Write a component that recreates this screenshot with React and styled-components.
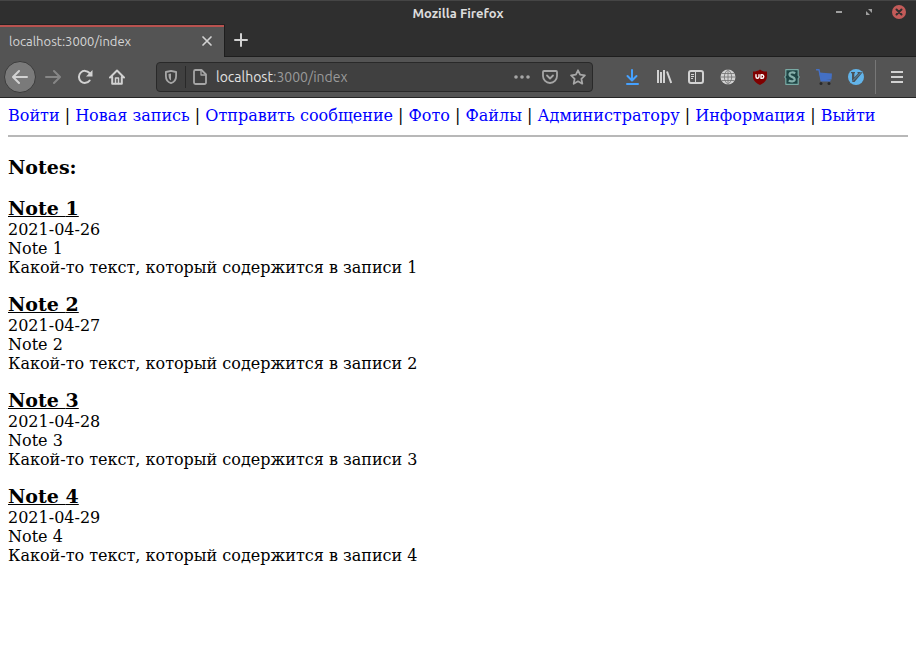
import React from "react";
import styled, { createGlobalStyle } from "styled-components";

const GlobalStyle = createGlobalStyle`
  * { box-sizing: border-box; }
  html, body { margin: 0; background: #ffffff; }
`;

const UI_FONT = '"Ubuntu", "Noto Sans", "Open Sans", sans-serif';

const Window = styled.div`
  min-height: 100vh;
  background: #ffffff;
  font-family: ${UI_FONT};
`;

const TitleBar = styled.header`
  display: grid;
  grid-template-columns: 1fr auto 1fr;
  align-items: center;
  height: 25px;
  padding-right: 9px;
  background: #2f2f2f;
  border-top: 1px solid #454545;
`;

const WindowTitle = styled.h1`
  grid-column: 2;
  margin: 0;
  padding-left: 9px;
  font-size: 13px;
  line-height: 18px;
  font-weight: 600;
  color: #dcdcdc;
`;

const WindowControls = styled.div`
  display: flex;
  justify-content: flex-end;
  gap: 14px;
`;

const PlainButton = styled.button`
  display: flex;
  align-items: center;
  justify-content: center;
  flex: none;
  padding: 0;
  border: 0;
  background: transparent;
  color: ${(p) => p.$color || "#d2d2d2"};
`;

const ControlButton = styled(PlainButton)`
  width: 16px;
  height: 22px;
`;

const TabStrip = styled.div`
  display: flex;
  height: 32px;
  background: #2f2f2f;
`;

const Tab = styled.div`
  display: flex;
  width: 225px;
  background: #545454;
  border-right: 1px solid #1e1e1e;
  box-shadow: 0 -1px 0 #222222;
`;

const TabBody = styled.div`
  display: flex;
  align-items: center;
  flex: 1;
  padding: 0 9px 2px;
  border-top: 2px solid #b9524f;
`;

const TabLabel = styled.span`
  flex: 1;
  font-size: 13px;
  line-height: 18px;
  color: #d6d6d6;
`;

const TabButton = styled(PlainButton)`
  width: 16px;
  height: 16px;
`;

const NewTabArea = styled.div`
  display: flex;
  align-items: center;
  flex: 1;
  padding: 0 8px 1px;
  border-bottom: 1px solid #1e1e1e;
`;

const Toolbar = styled.nav`
  display: flex;
  align-items: center;
  height: 41px;
  padding: 0 3px 0 4px;
  background: #545454;
  border-bottom: 1px solid #252525;
`;

const ToolButton = styled(PlainButton)`
  width: 32px;
  height: 32px;
`;

const BackButton = styled(ToolButton)`
  margin-right: 1px;
  border: 1px solid #3c3c3c;
  border-radius: 50%;
  background: #7a7a7a;
`;

const AddressBar = styled.div`
  display: flex;
  align-items: center;
  flex: 1;
  min-width: 0;
  height: 30px;
  margin: 0 23px;
  background: #404040;
  border: 1px solid #292929;
  border-radius: 4px;
`;

const AddressButton = styled(PlainButton)`
  width: 28px;
  height: 28px;
`;

const AddressDivider = styled.span`
  width: 1px;
  height: 22px;
  background: #292929;
`;

const Address = styled.div`
  flex: 1;
  min-width: 0;
  padding-left: 2px;
  font-size: 14px;
  line-height: 20px;
  white-space: nowrap;
  color: #9a9a9a;
`;

const Host = styled.span`
  color: #e2e2e2;
`;

const ToolbarDivider = styled.span`
  width: 1px;
  height: 34px;
  margin: 0 5px 0 3px;
  background: #777777;
`;

const Page = styled.main`
  padding: 8px;
  font-family: "DejaVu Serif", serif;
  font-size: 16px;
  line-height: 19px;
  color: #000000;
`;

const SiteNav = styled.nav`
  padding-bottom: 10px;
  border-bottom: 2px solid #b8b8b8;
`;

const NavLink = styled.a`
  color: #0000ff;
  text-decoration: none;
`;

const Heading = styled.h2`
  margin: 19px 0;
  font-size: 19px;
  line-height: 22px;
  font-weight: bold;
`;

const Note = styled.article`
  margin-bottom: 16px;
`;

const NoteTitle = styled.h3`
  margin: 0 0 1px;
  font-size: 19px;
  line-height: 22px;
  font-weight: bold;
  text-decoration: underline;
`;

const Line = styled.p`
  margin: 0;
`;

const Icon = ({ size = 16, children }) => (
  <svg
    width={size}
    height={size}
    viewBox={`0 0 ${size} ${size}`}
    fill="none"
    stroke="currentColor"
    strokeWidth="2"
    strokeLinecap="round"
    strokeLinejoin="round"
    aria-hidden="true"
  >
    {children}
  </svg>
);

const links = [
  "Войти",
  "Новая запись",
  "Отправить сообщение",
  "Фото",
  "Файлы",
  "Администратору",
  "Информация",
  "Выйти",
];

const notes = [
  { id: 1, date: "2021-04-26" },
  { id: 2, date: "2021-04-27" },
  { id: 3, date: "2021-04-28" },
  { id: 4, date: "2021-04-29" },
];

const extensions = [
  {
    label: "Downloads",
    color: "#45a1ff",
    icon: (
      <Icon>
        <path d="M8 1v10M3.500 7 8 11.500 12.500 7M3 15h11" />
      </Icon>
    ),
  },
  {
    label: "Library",
    icon: (
      <Icon>
        <path d="M2 1v13M5 3v11M8 1v13M11 2.500 15.200 14" strokeLinecap="butt" />
      </Icon>
    ),
  },
  {
    label: "Sidebars",
    icon: (
      <Icon>
        <rect x="1" y="2" width="14" height="12" rx="2" />
        <path d="M7.500 2v12" strokeWidth="1" />
        <path d="M3 5.500h3M3 7.500h3M3 9.500h2" strokeWidth="1" strokeLinecap="butt" />
      </Icon>
    ),
  },
  {
    label: "Proxy",
    icon: (
      <Icon>
        <circle cx="8" cy="8" r="7.500" fill="#d2d2d2" stroke="none" />
        <path
          d="M8 .5v15M.5 8h15M2 4.500h12M2 11.500h12M8 .5c-5 4-5 11 0 15M8 .5c5 4 5 11 0 15"
          stroke="#707070"
          strokeWidth=".8"
        />
      </Icon>
    ),
  },
  {
    label: "uBlock Origin",
    icon: (
      <Icon>
        <path d="M8 .5c2 1.500 4 2 7 2v5c0 4-3 6.500-7 8.500-4-2-7-4.500-7-8.500v-5c3 0 5-.5 7-2z" fill="#800000" stroke="none" />
        <path d="M4 5.800v2a1.500 1.500 0 0 0 3 0v-2" stroke="#fff" strokeWidth="1.400" />
        <path d="M9 5.800h1a1.800 1.800 0 0 1 0 3.600H9z" stroke="#fff" strokeWidth="1.400" />
      </Icon>
    ),
  },
  {
    label: "Stylus",
    icon: (
      <Icon>
        <path d="M1.800 .7h12.400v5.800L15.300 8l-1.100 1.500v5.800H1.800V9.500L.7 8l1.100-1.500z" fill="#1f4545" stroke="#79aaa5" strokeWidth="1.200" />
        <path d="M11.200 4.300C9.500 3 5.500 3 5.500 5.500c0 2.800 5.200 2 5.200 4.800 0 2.700-4 2.500-5.900 1.200" stroke="#86b0ab" strokeWidth="2.200" strokeLinecap="butt" />
      </Icon>
    ),
  },
  {
    label: "Shopping",
    icon: (
      <Icon>
        <path d="M3 3.500 16 4.500l-.5 6L5 11.500z" fill="#4470c4" stroke="none" />
        <path d="M.5 .7H3L5.200 11.800H14" stroke="#4470c4" strokeWidth="1.400" />
        <circle cx="5" cy="14.500" r="1.500" fill="#292929" stroke="none" />
        <circle cx="13" cy="14.500" r="1.500" fill="#292929" stroke="none" />
      </Icon>
    ),
  },
  {
    label: "Vim keys",
    icon: (
      <Icon>
        <circle cx="8" cy="8" r="8" fill="#62b4ea" stroke="none" />
        <path d="M3 3h4v1l-.7.600v4L10 4.500 9.500 4V3H14v1L6.500 13H4V4.500L3 4z" fill="#4a5258" stroke="none" />
        <path d="M2.500 14 14 2.500" stroke="#62b4ea" strokeWidth=".6" />
      </Icon>
    ),
  },
];

function BrowserToolbar() {
  return (
    <Toolbar aria-label="Browser toolbar">
      <BackButton aria-label="Back">
        <Icon>
          <path d="M15 8H1.500M7 2 1 8l6 6" />
        </Icon>
      </BackButton>
      <ToolButton aria-label="Forward" $color="#868686" disabled>
        <Icon>
          <path d="M1 8h13.500M9 2l6 6-6 6" />
        </Icon>
      </ToolButton>
      <ToolButton aria-label="Reload">
        <Icon>
          <path d="M12.700 11.500A6 6 0 1 1 12.500 4" />
          <path d="M15.500 1v6.500H9z" fill="currentColor" stroke="none" />
        </Icon>
      </ToolButton>
      <ToolButton aria-label="Home">
        <Icon>
          <path d="M1 8.500 8 1.500l7 7M3.200 8v6.800h9.600V8" />
          <path d="M6.500 14.500V9h3v5.500" strokeWidth="1.500" />
        </Icon>
      </ToolButton>
      <AddressBar>
        <AddressButton aria-label="Tracking protection" $color="#a6a6a6">
          <Icon>
            <path d="M8 1.800 2.900 3v4c0 4 2 6.200 5.100 7.200 3.100-1 5.100-3.200 5.100-7.200V3z" strokeWidth="1.800" />
            <path d="M8 4.500v7C6 10.500 5.500 8.500 5.500 5z" fill="currentColor" stroke="none" />
          </Icon>
        </AddressButton>
        <AddressDivider />
        <AddressButton aria-label="Site information" $color="#a6a6a6">
          <Icon>
            <path d="M9.500 1H3.500A1.500 1.500 0 0 0 2 2.500v11A1.500 1.500 0 0 0 3.500 15h9a1.500 1.500 0 0 0 1.500-1.500v-8z" strokeWidth="1.800" />
            <path d="M9 1.500V6h4.500" strokeWidth="1.300" />
          </Icon>
        </AddressButton>
        <Address>
          <Host>localhost</Host>:3000/index
        </Address>
        <AddressButton aria-label="Page actions" $color="#a6a6a6">
          <Icon>
            <g fill="currentColor" stroke="none">
              <circle cx="2" cy="8" r="1.800" />
              <circle cx="8" cy="8" r="1.800" />
              <circle cx="14" cy="8" r="1.800" />
            </g>
          </Icon>
        </AddressButton>
        <AddressButton aria-label="Save to Pocket" $color="#a6a6a6">
          <Icon>
            <path d="M2 2h12a1 1 0 0 1 1 1v4a7 7 0 0 1-14 0V3a1 1 0 0 1 1-1zM5 6.500l3 3 3-3" strokeWidth="1.800" />
          </Icon>
        </AddressButton>
        <AddressButton aria-label="Bookmark page" $color="#a6a6a6">
          <Icon>
            <path d="m8 1.300 2.100 4.400 4.800.7-3.500 3.400.9 4.900L8 12.300l-4.300 2.400.9-4.900L1.100 6.400l4.800-.7z" strokeWidth="1.800" />
          </Icon>
        </AddressButton>
      </AddressBar>
      {extensions.map((item) => (
        <ToolButton key={item.label} aria-label={item.label} $color={item.color}>
          {item.icon}
        </ToolButton>
      ))}
      <ToolbarDivider />
      <ToolButton aria-label="Menu">
        <Icon>
          <path d="M2 3h12M2 8h12M2 13h12" strokeLinecap="butt" />
        </Icon>
      </ToolButton>
    </Toolbar>
  );
}

export default function App() {
  return (
    <Window>
      <GlobalStyle />
      <TitleBar>
        <WindowTitle>Mozilla Firefox</WindowTitle>
        <WindowControls>
          <ControlButton aria-label="Minimize" $color="#a0a0a0">
            <Icon>
              <path d="M5 7h6" strokeLinecap="butt" />
            </Icon>
          </ControlButton>
          <ControlButton aria-label="Maximize" $color="#a0a0a0">
            <Icon>
              <path d="M7 4h4v4zM5 6v4h4z" fill="currentColor" stroke="none" />
            </Icon>
          </ControlButton>
          <ControlButton aria-label="Close window">
            <Icon>
              <circle cx="8" cy="7" r="7" fill="#c35b59" stroke="none" />
              <path d="m5.500 4.500 5 5m0-5-5 5" stroke="#2f2f2f" />
            </Icon>
          </ControlButton>
        </WindowControls>
      </TitleBar>
      <TabStrip>
        <Tab>
          <TabBody>
            <TabLabel>localhost:3000/index</TabLabel>
            <TabButton aria-label="Close tab">
              <Icon>
                <path d="m4 4 8 8m0-8-8 8" strokeWidth="1.700" />
              </Icon>
            </TabButton>
          </TabBody>
        </Tab>
        <NewTabArea>
          <TabButton aria-label="New tab">
            <Icon>
              <path d="M8 2v12M2 8h12" />
            </Icon>
          </TabButton>
        </NewTabArea>
      </TabStrip>
      <BrowserToolbar />
      <Page>
        <SiteNav aria-label="Site">
          {links.map((label, index) => (
            <React.Fragment key={label}>
              {index > 0 && " | "}
              <NavLink href="#">{label}</NavLink>
            </React.Fragment>
          ))}
        </SiteNav>
        <Heading>Notes:</Heading>
        {notes.map((note) => (
          <Note key={note.id}>
            <NoteTitle>Note {note.id}</NoteTitle>
            <Line>{note.date}</Line>
            <Line>Note {note.id}</Line>
            <Line>Какой-то текст, который содержится в записи {note.id}</Line>
          </Note>
        ))}
      </Page>
    </Window>
  );
}
